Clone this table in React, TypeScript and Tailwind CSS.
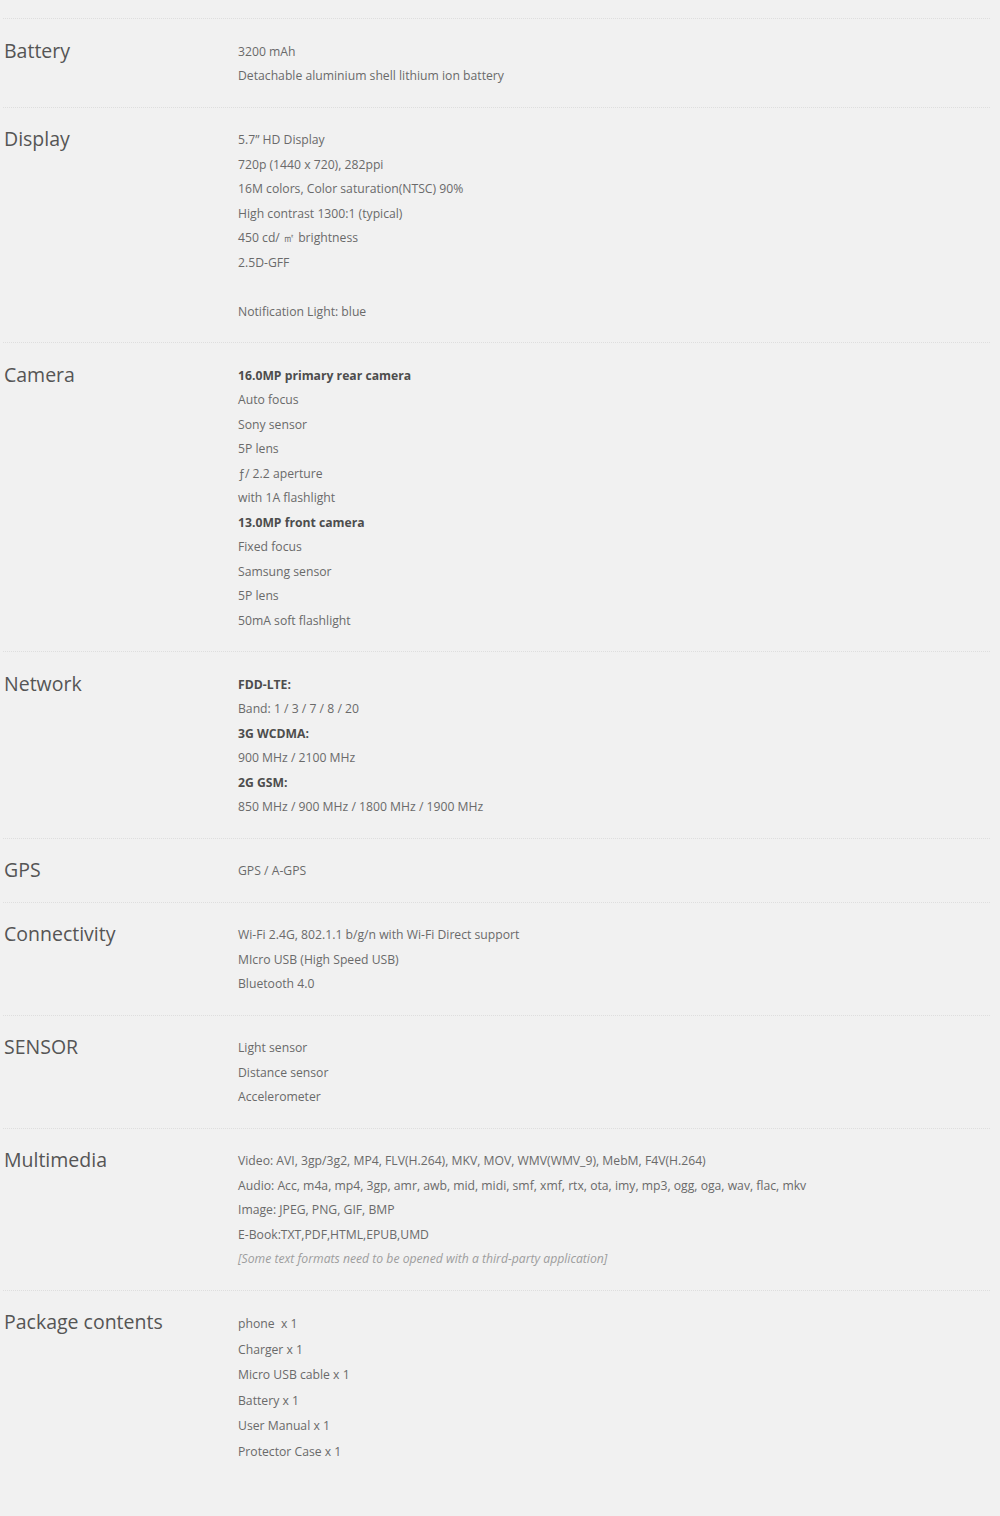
import React from 'react';

type Line = { text: string; bold?: boolean; italic?: boolean; blank?: boolean };

interface SpecRowProps {
  label: string;
  lines: Line[];
  leading?: string;
}

const t = (text: string): Line => ({ text });
const b = (text: string): Line => ({ text, bold: true });

const specs: { label: string; lines: Line[]; loose?: boolean }[] = [
  {
    label: 'Battery',
    lines: [t('3200 mAh'), t('Detachable aluminium shell lithium ion battery')],
  },
  {
    label: 'Display',
    lines: [
      t('5.7” HD Display'),
      t('720p (1440 x 720), 282ppi'),
      t('16M colors, Color saturation(NTSC) 90%'),
      t('High contrast 1300:1 (typical)'),
      t('450 cd/ ㎡ brightness'),
      t('2.5D-GFF'),
      { text: '', blank: true },
      t('Notification Light: blue'),
    ],
  },
  {
    label: 'Camera',
    lines: [
      b('16.0MP primary rear camera'),
      t('Auto focus'),
      t('Sony sensor'),
      t('5P lens'),
      t('ƒ/ 2.2 aperture'),
      t('with 1A flashlight'),
      b('13.0MP front camera'),
      t('Fixed focus'),
      t('Samsung sensor'),
      t('5P lens'),
      t('50mA soft flashlight'),
    ],
  },
  {
    label: 'Network',
    lines: [
      b('FDD-LTE:'),
      t('Band: 1 / 3 / 7 / 8 / 20'),
      b('3G WCDMA:'),
      t('900 MHz / 2100 MHz'),
      b('2G GSM:'),
      t('850 MHz / 900 MHz / 1800 MHz / 1900 MHz'),
    ],
  },
  { label: 'GPS', lines: [t('GPS / A-GPS')] },
  {
    label: 'Connectivity',
    lines: [
      t('Wi-Fi 2.4G, 802.1.1 b/g/n with Wi-Fi Direct support'),
      t('MIcro USB (High Speed USB)'),
      t('Bluetooth 4.0'),
    ],
  },
  {
    label: 'SENSOR',
    lines: [t('Light sensor'), t('Distance sensor'), t('Accelerometer')],
  },
  {
    label: 'Multimedia',
    lines: [
      t('Video: AVI, 3gp/3g2, MP4, FLV(H.264), MKV, MOV, WMV(WMV_9), MebM, F4V(H.264)'),
      t('Audio: Acc, m4a, mp4, 3gp, amr, awb, mid, midi, smf, xmf, rtx, ota, imy, mp3, ogg, oga, wav, flac, mkv'),
      t('Image: JPEG, PNG, GIF, BMP'),
      t('E-Book:TXT,PDF,HTML,EPUB,UMD'),
      { text: '[Some text formats need to be opened with a third-party application]', italic: true },
    ],
  },
  {
    label: 'Package contents',
    loose: true,
    lines: [
      t('phone  x 1'),
      t('Charger x 1'),
      t('Micro USB cable x 1'),
      t('Battery x 1'),
      t('User Manual x 1'),
      t('Protector Case x 1'),
    ],
  },
];

const SpecRow = ({ label, lines, leading = 'leading-[24.5px]' }: SpecRowProps) => {
  return (
    <div className="flex border-t border-dotted border-[#dedede] pt-[20.5px] pb-[18px]">
      <h3 className="w-[235px] shrink-0 pl-px text-[19.5px] leading-[24.5px] font-normal text-[#555] -translate-y-px">
        {label}
      </h3>
      <div className={`text-[12.2px] text-[#6a6a6a] ${leading}`}>
        {lines.map((line, i) => {
          if (line.blank) return <div key={i} className="h-[24.5px]" />;
          if (line.bold)
            return (
              <p key={i} className="font-bold text-[#4d4d4d]">
                {line.text}
              </p>
            );
          if (line.italic)
            return (
              <p key={i} className="italic text-[#9d9d9d]">
                {line.text}
              </p>
            );
          return (
            <p key={i} className="whitespace-pre">
              {line.text}
            </p>
          );
        })}
      </div>
    </div>
  );
};

const App = () => {
  return (
    <div
      className="min-h-[1516px] bg-[#f1f1f1] pt-[18px]"
      style={{ fontFamily: '"Open Sans", "Noto Sans", sans-serif' }}
    >
      <div className="ml-[3px] w-[987px]">
        {specs.map((s) => (
          <SpecRow
            key={s.label}
            label={s.label}
            lines={s.lines}
            leading={s.loose ? 'leading-[25.6px]' : 'leading-[24.5px]'}
          />
        ))}
      </div>
    </div>
  );
};

export default App;
